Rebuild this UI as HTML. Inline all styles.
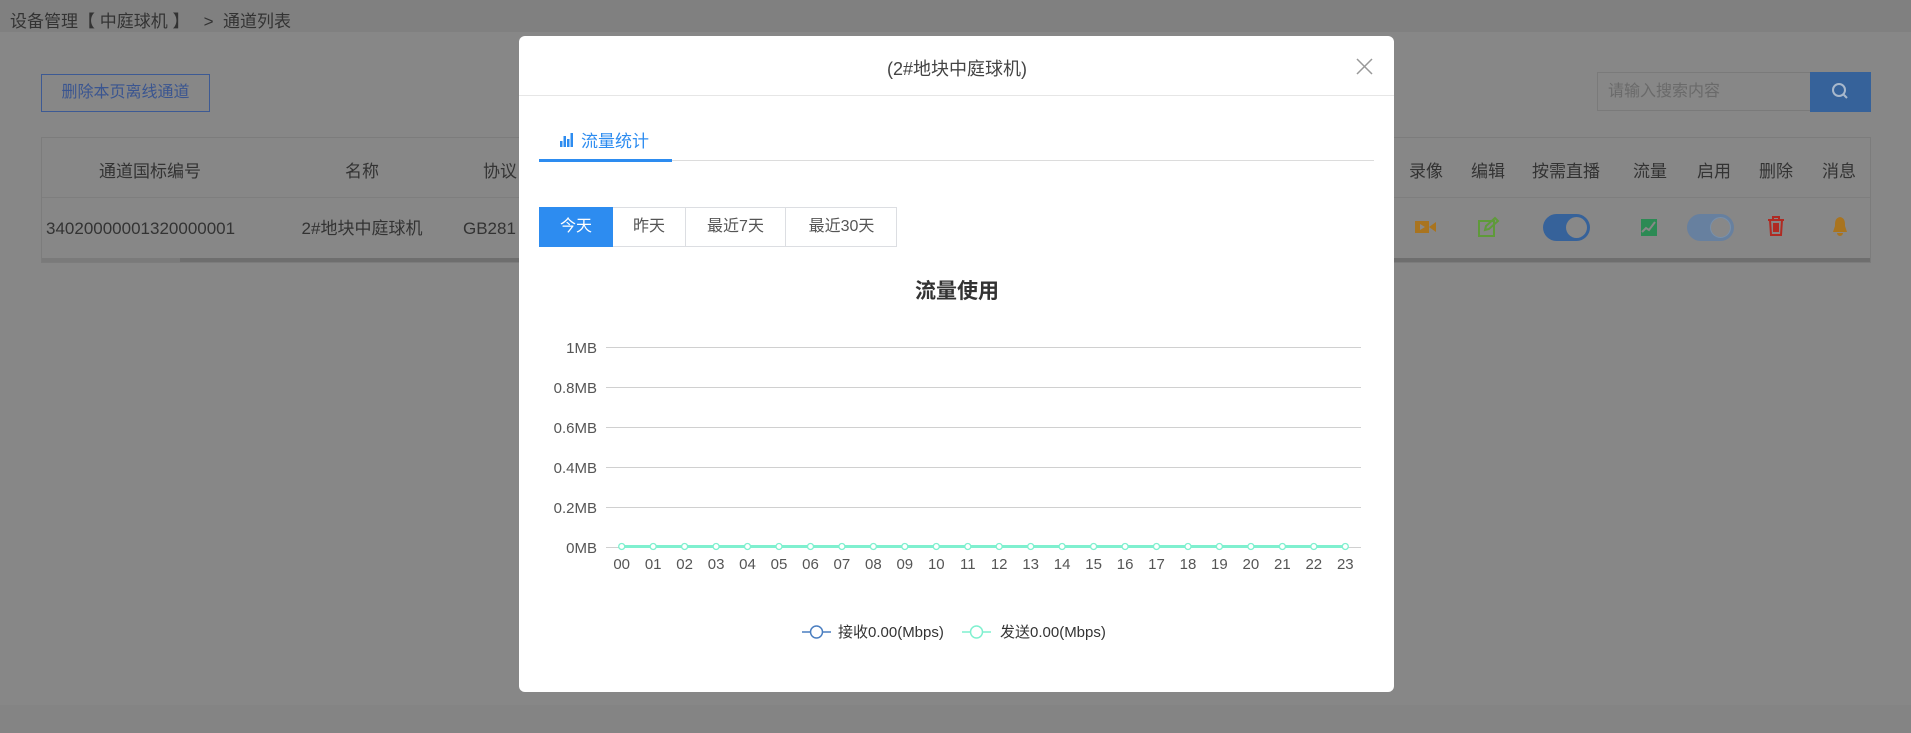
<!DOCTYPE html>
<html><head><meta charset="utf-8"><style>
*{margin:0;padding:0;box-sizing:border-box}
body{width:1911px;height:733px;overflow:hidden;background:#878787;font-family:"Liberation Sans","Noto Sans CJK SC",sans-serif;position:relative;color:#3a3a3a}
.a{position:absolute;white-space:nowrap;line-height:1.2}
.c{transform:translateX(-50%)}
</style></head><body>
<div class="a" style="left:0;top:0;width:1911px;height:32px;background:#808080"></div>
<div class="a" style="left:10px;top:12px;font-size:17px;color:#333">设备管理【 中庭球机 】&nbsp;&nbsp;&nbsp;&gt;&nbsp;&nbsp;通道列表</div>
<div class="a" style="left:41px;top:74px;width:169px;height:38px;border:1px solid #3d5a94;color:#3a5590;font-size:16px;line-height:36px;text-align:center">删除本页离线通道</div>
<div class="a" style="left:1597px;top:72px;width:214px;height:39px;border:1px solid #7a7a7a;color:#6a6a6a;font-size:16px;line-height:37px;padding-left:10px">请输入搜索内容</div>
<div class="a" style="left:1810px;top:72px;width:61px;height:40px;background:#36629a"></div>
<svg class="a" style="left:1829px;top:80px" width="22" height="22" viewBox="0 0 22 22"><circle cx="10" cy="10" r="6" fill="none" stroke="#a8b8cc" stroke-width="2"/><line x1="14.5" y1="14.5" x2="18" y2="18" stroke="#a8b8cc" stroke-width="2"/></svg>
<div class="a" style="left:41px;top:137px;width:1830px;height:126px;border:1px solid #7c7c7c"></div>
<div class="a" style="left:42px;top:197px;width:1828px;height:1px;background:#7e7e7e"></div>
<div class="a" style="left:42px;top:258px;width:1828px;height:4px;background:#7a7a7a"></div>
<div class="a" style="left:180px;top:258px;width:1690px;height:4px;background:#6e6e6e"></div>
<div class="a" style="top:162px;font-size:17px;color:#333;left:0;width:1911px;height:24px">
<span class="a c" style="left:150px">通道国标编号</span><span class="a c" style="left:362px">名称</span><span class="a c" style="left:500px">协议</span>
<span class="a c" style="left:1426px">录像</span><span class="a c" style="left:1488px">编辑</span><span class="a c" style="left:1566px">按需直播</span><span class="a c" style="left:1650px">流量</span><span class="a c" style="left:1714px">启用</span><span class="a c" style="left:1776px">删除</span><span class="a c" style="left:1839px">消息</span></div>
<div class="a" style="top:219px;font-size:17px;color:#333;left:46px">34020000001320000001</div>
<div class="a c" style="top:219px;font-size:17px;color:#333;left:362px">2#地块中庭球机</div>
<div class="a" style="top:219px;font-size:17px;color:#333;left:463px">GB281</div>
<svg class="a" style="left:1414px;top:217px" width="24" height="20"><rect x="1" y="4" width="14" height="12" fill="#a9741f"/><path d="M15 10 L22 5 V15 Z" fill="#a9741f"/><path d="M6 7 L11 10 L6 13Z" fill="#8a8a8a"/></svg>
<svg class="a" style="left:1477px;top:216px" width="24" height="22"><rect x="2" y="5" width="15" height="15" fill="none" stroke="#5f9a3a" stroke-width="2"/><path d="M8 14 L9 10 L18 2 L21 5 L12 13 Z" fill="none" stroke="#5f9a3a" stroke-width="2"/></svg>
<div class="a" style="left:1543px;top:214px;width:47px;height:27px;border-radius:14px;background:#36629a"><div class="a" style="left:23px;top:3px;width:21px;height:21px;border-radius:50%;background:#888"></div></div>
<svg class="a" style="left:1641px;top:219px" width="16" height="17"><rect width="16" height="17" fill="#2c8a54"/><path d="M1 13 L5 9 L8 11 L14 3" stroke="#888" stroke-width="2" fill="none"/></svg>
<div class="a" style="left:1687px;top:214px;width:47px;height:27px;border-radius:14px;background:#67809f"><div class="a" style="left:23px;top:3px;width:21px;height:21px;border-radius:50%;background:#888;border:1px solid #7890ab"></div></div>
<svg class="a" style="left:1767px;top:215px" width="18" height="22"><path d="M1 5 H17 M6 5 V2 H12 V5 M3 5 L4 20 H14 L15 5 M7 8 V17 M9 8 V17 M11 8 V17" stroke="#b02a22" stroke-width="2" fill="none"/></svg>
<svg class="a" style="left:1831px;top:216px" width="18" height="21"><path d="M9 1 C4 2 4 6 4 10 L2 16 H16 L14 10 C14 6 14 2 9 1Z M6 17 A3 3 0 0 0 12 17Z" fill="#a9741f"/></svg>
<div class="a" style="left:0;top:705px;width:1911px;height:28px;background:#848484"></div>

<div class="a" style="left:519px;top:36px;width:875px;height:656px;background:#fff;border-radius:6px"></div>
<div class="a" style="left:519px;top:95px;width:875px;height:1px;background:#e6e6e6"></div>
<div class="a c" style="left:957px;top:59px;font-size:18px;color:#444">(2#地块中庭球机)</div>
<svg class="a" style="left:1356px;top:58px" width="17" height="17"><path d="M1 1 L16 16 M16 1 L1 16" stroke="#999" stroke-width="1.5"/></svg>
<svg class="a" style="left:560px;top:132px" width="14" height="16"><rect x="0" y="9" width="2.5" height="6" fill="#2d8cf0"/><rect x="3.5" y="4" width="2.5" height="11" fill="#2d8cf0"/><rect x="7" y="7" width="2.5" height="8" fill="#2d8cf0"/><rect x="10.5" y="1" width="2.5" height="14" fill="#2d8cf0"/></svg>
<div class="a" style="left:581px;top:132px;font-size:17px;color:#2d8cf0">流量统计</div>
<div class="a" style="left:539px;top:160px;width:835px;height:1px;background:#dcdcdc"></div>
<div class="a" style="left:539px;top:159px;width:133px;height:3px;background:#2d8cf0"></div>
<div class="a" style="left:539px;top:207px;width:358px;height:40px;border:1px solid #dcdee2"></div>
<div class="a" style="left:539px;top:207px;width:74px;height:40px;background:#2d8cf0;color:#fff;font-size:16px;line-height:40px;text-align:center">今天</div>
<div class="a" style="left:613px;top:207px;width:73px;height:40px;border-right:1px solid #dcdee2;color:#555;font-size:16px;line-height:40px;text-align:center">昨天</div>
<div class="a" style="left:686px;top:207px;width:100px;height:40px;border-right:1px solid #dcdee2;color:#555;font-size:16px;line-height:40px;text-align:center">最近7天</div>
<div class="a" style="left:786px;top:207px;width:111px;height:40px;color:#555;font-size:16px;line-height:40px;text-align:center">最近30天</div>
<div class="a c" style="left:957px;top:279px;font-size:21px;font-weight:bold;color:#333">流量使用</div>
<svg class="a" style="left:519px;top:330px" width="875" height="320" font-family="Liberation Sans, Noto Sans CJK SC, sans-serif" font-size="15" fill="#555">
<g stroke="#d0d0d0" stroke-width="1">
<line x1="87" y1="17.5" x2="842" y2="17.5"/><line x1="87" y1="57.5" x2="842" y2="57.5"/><line x1="87" y1="97.5" x2="842" y2="97.5"/><line x1="87" y1="137.5" x2="842" y2="137.5"/><line x1="87" y1="177.5" x2="842" y2="177.5"/><line x1="87" y1="217.5" x2="842" y2="217.5"/>
</g>
<g text-anchor="end"><text x="78" y="23">1MB</text><text x="78" y="63">0.8MB</text><text x="78" y="103">0.6MB</text><text x="78" y="143">0.4MB</text><text x="78" y="183">0.2MB</text><text x="78" y="223">0MB</text></g>
<line x1="102" y1="216.5" x2="827" y2="216.5" stroke="#7ff0cf" stroke-width="3"/>
<g fill="#fff" stroke="#7ff0cf" stroke-width="1.3">
<circle cx="102.7" cy="216.5" r="3"/><circle cx="134.2" cy="216.5" r="3"/><circle cx="165.6" cy="216.5" r="3"/><circle cx="197.1" cy="216.5" r="3"/><circle cx="228.5" cy="216.5" r="3"/><circle cx="260" cy="216.5" r="3"/><circle cx="291.5" cy="216.5" r="3"/><circle cx="322.9" cy="216.5" r="3"/><circle cx="354.4" cy="216.5" r="3"/><circle cx="385.8" cy="216.5" r="3"/><circle cx="417.3" cy="216.5" r="3"/><circle cx="448.8" cy="216.5" r="3"/><circle cx="480.2" cy="216.5" r="3"/><circle cx="511.7" cy="216.5" r="3"/><circle cx="543.1" cy="216.5" r="3"/><circle cx="574.6" cy="216.5" r="3"/><circle cx="606.1" cy="216.5" r="3"/><circle cx="637.5" cy="216.5" r="3"/><circle cx="669" cy="216.5" r="3"/><circle cx="700.4" cy="216.5" r="3"/><circle cx="731.9" cy="216.5" r="3"/><circle cx="763.4" cy="216.5" r="3"/><circle cx="794.8" cy="216.5" r="3"/><circle cx="826.3" cy="216.5" r="3"/>
</g>
<g text-anchor="middle">
<text x="102.7" y="239">00</text><text x="134.2" y="239">01</text><text x="165.6" y="239">02</text><text x="197.1" y="239">03</text><text x="228.5" y="239">04</text><text x="260" y="239">05</text><text x="291.5" y="239">06</text><text x="322.9" y="239">07</text><text x="354.4" y="239">08</text><text x="385.8" y="239">09</text><text x="417.3" y="239">10</text><text x="448.8" y="239">11</text><text x="480.2" y="239">12</text><text x="511.7" y="239">13</text><text x="543.1" y="239">14</text><text x="574.6" y="239">15</text><text x="606.1" y="239">16</text><text x="637.5" y="239">17</text><text x="669" y="239">18</text><text x="700.4" y="239">19</text><text x="731.9" y="239">20</text><text x="763.4" y="239">21</text><text x="794.8" y="239">22</text><text x="826.3" y="239">23</text>
</g>
<line x1="283" y1="302" x2="312" y2="302" stroke="#4a7ec0" stroke-width="1.5"/><circle cx="297.5" cy="302" r="6" fill="#fff" stroke="#4a7ec0" stroke-width="1.5"/>
<text x="319" y="307" font-size="15" fill="#333">接收0.00(Mbps)</text>
<line x1="443" y1="302" x2="472" y2="302" stroke="#7ff0cf" stroke-width="1.5"/><circle cx="457.5" cy="302" r="6" fill="#fff" stroke="#7ff0cf" stroke-width="1.5"/>
<text x="481" y="307" font-size="15" fill="#333">发送0.00(Mbps)</text>
</svg>
</body></html>
